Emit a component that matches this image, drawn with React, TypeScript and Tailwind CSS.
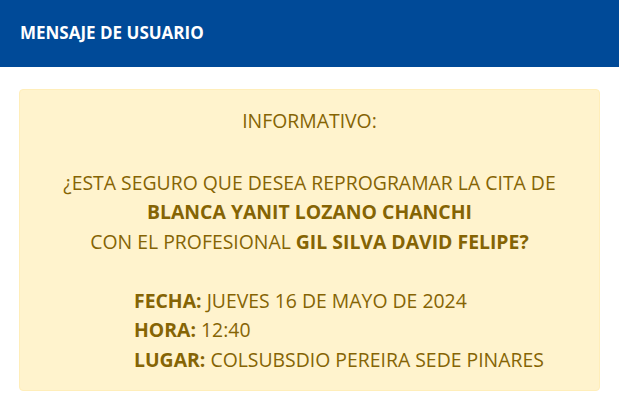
export default function App() {
  return (
    <div className="w-[619px] h-[414px] bg-white font-['Open_Sans',sans-serif] overflow-hidden">
      <div className="h-[67px] bg-[#004a98] flex items-center px-5">
        <h1 className="text-white font-bold text-[17px] pb-[1px]">MENSAJE DE USUARIO</h1>
      </div>
      <div className="px-[19px] pt-[22px]">
        <div className="bg-[#fff3cd] border border-[#ffeeba] rounded-[4px] text-[#856404] text-[19.4px] leading-[29.5px] pt-[16px] pb-[16px]">
          <p className="text-center">INFORMATIVO:</p>
          <p className="text-center mt-[32px]">
            ¿ESTA SEGURO QUE DESEA REPROGRAMAR LA CITA DE
            <br />
            <b>BLANCA YANIT LOZANO CHANCHI</b>
            <br />
            CON EL PROFESIONAL <b>GIL SILVA DAVID FELIPE?</b>
          </p>
          <div className="ml-[114px] mt-[29.5px]">
            <p><b>FECHA:</b> JUEVES 16 DE MAYO DE 2024</p>
            <p><b>HORA:</b> 12:40</p>
            <p><b>LUGAR:</b> COLSUBSDIO PEREIRA SEDE PINARES</p>
          </div>
        </div>
      </div>
    </div>
  );
}
